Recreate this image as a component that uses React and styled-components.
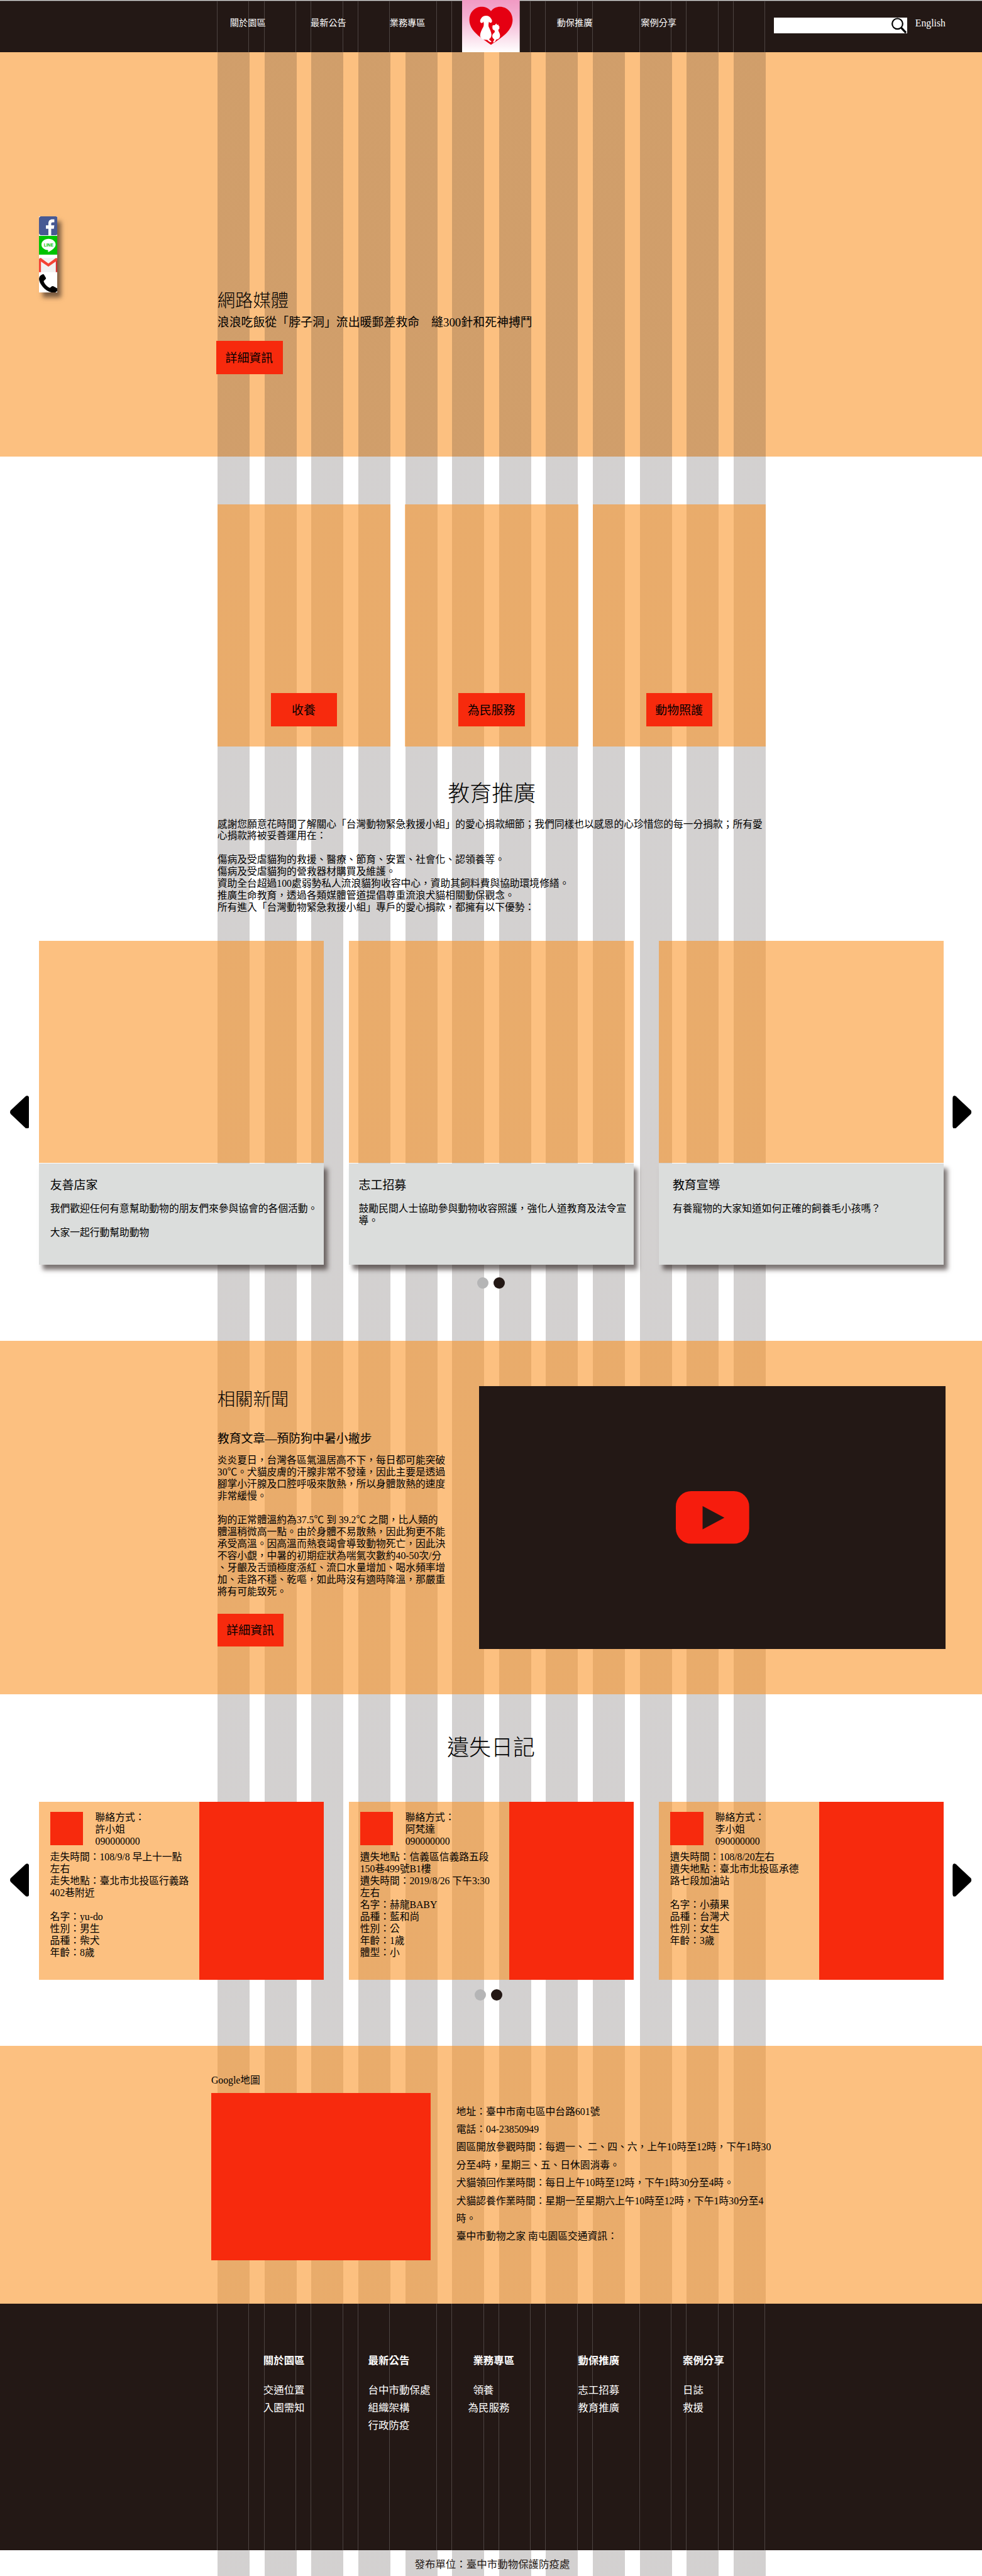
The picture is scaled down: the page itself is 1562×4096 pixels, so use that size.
import React from "react";
import styled, { createGlobalStyle, css } from "styled-components";

// Design units are those of a 1981px wide artboard, shown in a 1562px wide page.
const RATIO = 1562 / 1981;
const u = (n) => `${+(n * RATIO).toFixed(3)}px`;

const ink = "#231815";
const red = "#f72a0d";
const orange = "#fcc080";
const orangeGlass = "rgba(250, 142, 28, 0.56)";
const stripe = "rgba(35, 24, 21, 0.2)";
const hairline = "#4c4341";

const stripes = css`
  background-image: repeating-linear-gradient(
    90deg,
    ${stripe} 0 ${u(64.7)},
    transparent ${u(64.7)} ${u(94.66)}
  );
  background-position: ${u(438.5)} 0;
  background-size: ${u(1106.2)} 100%;
  background-repeat: no-repeat;
`;

const hairlines = css`
  background-image: repeating-linear-gradient(
    90deg,
    ${hairline} 0 ${u(1.1)},
    transparent ${u(1.1)} ${u(64)},
    ${hairline} ${u(64)} ${u(65.1)},
    transparent ${u(65.1)} ${u(94.66)}
  );
  background-position: ${u(437.8)} 0;
  background-size: ${u(1107)} 100%;
  background-repeat: no-repeat;
`;

const GlobalStyle = createGlobalStyle`
  *, *::before, *::after { box-sizing: border-box; }
  body { margin: 0; background: #fff; }
`;

const Page = styled.main`
  width: 1562px;
  height: 4096px;
  overflow: hidden;
  color: #000;
  background-color: #fff;
  ${stripes}
  font-family: "Liberation Serif", "Noto Sans CJK TC", serif;
  font-weight: 400;
  font-size: ${u(20)};
  line-height: ${u(24)};
`;

/* ---------- shared parts ---------- */

const Line = styled.div`
  min-height: 1lh;
  white-space: pre;
`;

const Copy = styled.div`
  margin-top: ${(p) => u(p.$top || 0)};
  line-height: ${(p) => u(p.$leading || 24)};
`;

const Lines = ({ lines, ...rest }) => (
  <Copy {...rest}>
    {lines.map((line, i) => (
      <Line key={i}>{line}</Line>
    ))}
  </Copy>
);

const Button = styled.button`
  display: flex;
  align-items: center;
  justify-content: center;
  width: ${u(134)};
  height: ${u(67)};
  margin: ${(p) => u(p.$top || 0)} 0 0 ${(p) => u(p.$left || 0)};
  padding: ${u(3)} ${u(1)} 0 0;
  border: 0;
  background: ${red};
  color: #000;
  font: inherit;
  font-size: ${u(24)};
  line-height: ${u(30)};
  white-space: nowrap;
`;

const SectionTitle = styled.h2`
  margin: 0;
  padding-left: ${(p) => u(p.$shift || 0)};
  font-size: ${u(44.3)};
  font-weight: 300;
  line-height: ${u(60)};
  text-align: center;
`;

const BlockTitle = styled.h2`
  margin: 0;
  font-size: ${u(36)};
  font-weight: 300;
  line-height: ${u(44)};
`;

const Subtitle = styled.h3`
  margin: ${(p) => u(p.$top || 0)} 0 0;
  font-size: ${u(24)};
  font-weight: 400;
  line-height: ${u(30)};
  white-space: nowrap;
`;

const Carousel = styled.div`
  display: flex;
  align-items: flex-start;
  margin-top: ${(p) => u(p.$top)};
  padding-left: ${u(20)};
`;

const Slides = styled.div`
  display: flex;
  gap: ${u(50.3)};
  margin: 0 ${u(18)} 0 ${u(20)};
`;

const ArrowIcon = styled.svg`
  flex: none;
  display: block;
  width: ${u(38.4)};
  height: ${u(67)};
  margin-top: ${(p) => u(p.$top)};
  transform: ${(p) => (p.$flip ? "scaleX(-1)" : "none")};
`;

const Arrow = (props) => (
  <ArrowIcon viewBox="0 0 38 67" preserveAspectRatio="none" {...props}>
    <path d="M31 1.5Q34-.8 36.500 1.200Q38 2.600 38 6V61Q38 64.400 36.500 65.800Q34 67.800 31 65.500L1.500 37.500Q-1.500 33.500 1.500 29.500Z" />
  </ArrowIcon>
);

const Dots = styled.div`
  display: flex;
  gap: ${u(9.8)};
  margin: ${(p) => u(p.$top)} 0 0 ${(p) => u(p.$left)};
`;

const Dot = styled.span`
  width: ${u(23)};
  height: ${u(23)};
  border-radius: 50%;
  background: ${(p) => (p.$active ? ink : "#b5b5b6")};
`;

/* ---------- header ---------- */

const Header = styled.header`
  display: flex;
  align-items: flex-start;
  height: ${u(105.3)};
  padding-left: ${u(464)};
  background-color: ${ink};
  ${hairlines}
  box-shadow: inset 0 1px #d5d9d8, inset 0 2px #5c5351;
  color: #fff;
`;

const NavLink = styled.a`
  flex: none;
  width: ${u(72)};
  margin: ${u(34)} 0 0 ${(p) => u(p.$before)};
  font-size: ${u(18)};
  line-height: ${u(25)};
  white-space: nowrap;
`;

const Logo = styled.svg`
  flex: none;
  display: block;
  width: ${u(116.3)};
  height: ${u(105.3)};
  margin-left: ${u(74)};
`;

const SearchBox = styled.div`
  flex: none;
  display: flex;
  justify-content: flex-end;
  width: ${u(268)};
  height: ${u(32)};
  margin: ${u(35)} 0 0 ${u(197)};
  background: #fff;
`;

const SearchIcon = styled.svg`
  width: ${u(32)};
  height: ${u(32)};
`;

const Language = styled.a`
  margin: ${u(34)} 0 0 ${u(16.6)};
  font-size: ${u(20)};
  line-height: ${u(25)};
`;

/* ---------- hero ---------- */

const Hero = styled.section`
  display: flex;
  align-items: flex-start;
  height: ${u(815.4)};
  background-color: ${orange};
  ${stripes}
`;

const SocialBar = styled.aside`
  display: flex;
  flex-direction: column;
  width: ${u(38)};
  height: ${u(154)};
  margin: ${u(330.7)} ${u(322.5)} 0 ${u(78)};
  background: #fff;
  box-shadow: ${u(8)} ${u(10)} ${u(9)} rgba(35, 24, 21, 0.6);
`;

const SocialIcon = styled.svg`
  display: block;
  width: ${u(38)};
  height: ${(p) => u(p.$h)};
  margin-bottom: ${(p) => u(p.$gap)};
`;

const HeroCopy = styled.div`
  padding-top: ${u(480.2)};
`;

/* ---------- services ---------- */

const Services = styled.section`
  display: flex;
  gap: ${u(29.5)};
  padding: ${u(96.3)} 0 0 ${u(438.5)};
`;

const ServiceCard = styled.article`
  display: flex;
  align-items: flex-end;
  justify-content: center;
  width: ${u(349.2)};
  height: ${u(488.5)};
  padding-bottom: ${u(41)};
  background: ${orangeGlass};
`;

/* ---------- education ---------- */

const Education = styled.section`
  height: ${u(1198.5)};
  padding-top: ${u(66.5)};
`;

const Intro = styled.div`
  padding: ${u(18.7)} 0 0 ${u(438.5)};
`;

const EduCard = styled.article`
  display: flex;
  flex-direction: column;
  gap: ${u(1.3)};
  width: ${u(575)};
`;

const EduImage = styled.div`
  height: ${u(447.7)};
  background: ${orangeGlass};
`;

const EduPanel = styled.div`
  height: ${u(204)};
  padding: ${u(29)} 0 0 ${(p) => u(p.$inset)};
  background: #dbdddc;
  box-shadow: ${u(7)} ${u(10)} ${u(9)} rgba(35, 24, 21, 0.6);
`;

/* ---------- news ---------- */

const News = styled.section`
  display: flex;
  align-items: flex-start;
  height: ${u(713.3)};
  padding-left: ${u(438.5)};
  background: ${orangeGlass};
`;

const NewsCopy = styled.div`
  width: ${u(528.5)};
  padding-top: ${u(98)};
`;

const Video = styled.div`
  display: flex;
  align-items: center;
  justify-content: center;
  width: ${u(941)};
  height: ${u(530)};
  margin-top: ${u(91)};
  background: ${ink};
`;

const PlayButton = styled.svg`
  width: ${u(148)};
  height: ${u(106)};
`;

/* ---------- lost pets ---------- */

const Lost = styled.section`
  height: ${u(708.8)};
  padding-top: ${u(78.5)};
`;

const LostCard = styled.article`
  display: flex;
  width: ${u(575)};
  height: ${u(359)};
  background: ${orangeGlass};
`;

const LostInfo = styled.div`
  flex: 1;
  padding: ${u(21)} 0 0 ${u(22.6)};
`;

const LostPhoto = styled.div`
  width: ${u(251.5)};
  background: ${red};
`;

const Contact = styled.div`
  display: flex;
  gap: ${u(24.3)};
  height: ${u(79)};
`;

const Avatar = styled.div`
  width: ${u(67)};
  height: ${u(67)};
  background: ${red};
`;

/* ---------- map ---------- */

const Location = styled.section`
  display: flex;
  gap: ${u(51.4)};
  height: ${u(520)};
  padding-left: ${u(426)};
  background: ${orangeGlass};
`;

const MapColumn = styled.div`
  width: ${u(443)};
  padding-top: ${u(58)};
`;

const Map = styled.div`
  height: ${u(336.6)};
  margin-top: ${u(13)};
  background: ${red};
`;

/* ---------- footer ---------- */

const Footer = styled.footer`
  display: flex;
  height: ${u(497.3)};
  padding: ${u(100)} 0 0 ${u(531)};
  background-color: ${ink};
  ${hairlines}
  color: #fff;
  font-size: ${u(20.9)};
`;

const FooterColumn = styled.div`
  width: ${u(211.6)};
`;

const FooterTitle = styled.h4`
  margin: 0 0 ${u(27)};
  font-size: inherit;
  font-weight: 700;
  line-height: ${u(30)};
`;

const FooterLink = styled.a`
  display: block;
  margin-left: ${(p) => u(p.$shift || 0)};
  line-height: ${u(35.3)};
  white-space: nowrap;
`;

const Publisher = styled.p`
  margin: 0;
  padding: ${u(13)} 0 0 ${u(5)};
  color: ${ink};
  font-size: ${u(20.9)};
  line-height: ${u(30)};
  text-align: center;
`;

/* ---------- content ---------- */

const services = ["收養", "為民服務", "動物照護"];

const intro = [
  "感謝您願意花時間了解關心「台灣動物緊急救援小組」的愛心捐款細節；我們同樣也以感恩的心珍惜您的每一分捐款；所有愛",
  "心捐款將被妥善運用在：",
  "",
  "傷病及受虐貓狗的救援、醫療、節育、安置、社會化、認領養等。",
  "傷病及受虐貓狗的營救器材購買及維護。",
  "資助全台超過100處弱勢私人流浪貓狗收容中心，資助其飼料費與協助環境修繕。",
  "推廣生命教育，透過各類媒體管道提倡尊重流浪犬貓相關動保觀念。",
  "所有進入「台灣動物緊急救援小組」專戶的愛心捐款，都擁有以下優勢：",
];

const eduCards = [
  {
    title: "友善店家",
    inset: 22.7,
    lines: ["我們歡迎任何有意幫助動物的朋友們來參與協會的各個活動。", "", "大家一起行動幫助動物"],
  },
  {
    title: "志工招募",
    inset: 20,
    lines: ["鼓勵民間人士協助參與動物收容照護，強化人道教育及法令宣", "導。"],
  },
  { title: "教育宣導", inset: 28, lines: ["有養寵物的大家知道如何正確的飼養毛小孩嗎？"] },
];

const article = [
  "炎炎夏日，台灣各區氣溫居高不下，每日都可能突破",
  "30℃。犬貓皮膚的汗腺非常不發達，因此主要是透過",
  "腳掌小汗腺及口腔呼吸來散熱，所以身體散熱的速度",
  "非常緩慢。",
  "",
  "狗的正常體溫約為37.5℃ 到 39.2℃ 之間，比人類的",
  "體溫稍微高一點。由於身體不易散熱，因此狗更不能",
  "承受高溫。因高溫而熱衰竭會導致動物死亡，因此決",
  "不容小覷，中暑的初期症狀為喘氣次數約40-50次/分",
  "、牙齦及舌頭極度漲紅、流口水量增加、喝水頻率增",
  "加、走路不穩、乾嘔，如此時沒有適時降溫，那嚴重",
  "將有可能致死。",
];

const lostPets = [
  {
    contact: ["聯絡方式：", "許小姐", "090000000"],
    details: [
      "走失時間：108/9/8 早上十一點",
      "左右",
      "走失地點：臺北市北投區行義路",
      "402巷附近",
      "",
      "名字：yu-do",
      "性別：男生",
      "品種：柴犬",
      "年齡：8歲",
    ],
  },
  {
    contact: ["聯絡方式：", "阿梵達", "090000000"],
    details: [
      "遺失地點：信義區信義路五段",
      "150巷499號B1樓",
      "遺失時間：2019/8/26 下午3:30",
      "左右",
      "名字：赫龍BABY",
      "品種：藍和尚",
      "性別：公",
      "年齡：1歲",
      "體型：小",
    ],
  },
  {
    contact: ["聯絡方式：", "李小姐", "090000000"],
    details: [
      "遺失時間：108/8/20左右",
      "遺失地點：臺北市北投區承德",
      "路七段加油站",
      "",
      "名字：小蘋果",
      "品種：台灣犬",
      "性別：女生",
      "年齡：3歲",
    ],
  },
];

const address = [
  "地址：臺中市南屯區中台路601號",
  "電話：04-23850949",
  "園區開放參觀時間：每週一、 二、四、六，上午10時至12時，下午1時30",
  "分至4時，星期三、五、日休園消毒。",
  "犬貓領回作業時間：每日上午10時至12時，下午1時30分至4時。",
  "犬貓認養作業時間：星期一至星期六上午10時至12時，下午1時30分至4",
  "時。",
  "臺中市動物之家 南屯園區交通資訊：",
];

const footerColumns = [
  { title: "關於園區", links: [["交通位置"], ["入園需知"]] },
  { title: "最新公告", links: [["台中市動保處"], ["組織架構"], ["行政防疫"]] },
  { title: "業務專區", links: [["領養"], ["為民服務", -10]] },
  { title: "動保推廣", links: [["志工招募"], ["教育推廣"]] },
  { title: "案例分享", links: [["日誌"], ["救援"]] },
];

const BrandLogo = () => (
  <Logo viewBox="36 0 349 316" preserveAspectRatio="none">
    <defs>
      <linearGradient id="logoSky" x1="0" y1="0" x2="0" y2="1">
        <stop offset="0" stopColor="#f19ac3" />
        <stop offset="0.3" stopColor="#f3add0" />
        <stop offset="0.75" stopColor="#fbe3ee" />
        <stop offset="1" stopColor="#ffffff" />
      </linearGradient>
    </defs>
    <rect x="36" y="0" width="349" height="316" fill="url(#logoSky)" />
    <path
      fill="#e50012"
      d="M211 68C196 48 174 41 154 41C112 41 80 76 80 120C80 186 146 226 211 271C278 228 342 184 342 120C342 76 308 41 266 41C244 41 223 50 211 68Z"
    />
    <path
      fill="#fff"
      d="M182 95C168 95 158 101 152 110C144 120 143 131 149 137C155 142 162 138 165 130C169 142 168 152 165 162C156 178 146 198 145 214C145 225 152 233 162 239L189 242C196 250 204 256 212 255C215 253 213 249 208 246C204 243 200 240 200 236C208 232 214 222 214 210C213 192 203 176 197 162C195 152 196 142 199 131C203 138 210 140 215 135C220 129 217 119 210 110C204 100 194 95 182 95Z"
    />
    <path
      fill="#fff"
      d="M243 142L234 152L220 153L222 160L215 163L222 167L217 172L224 174L221 180L229 182C236 187 235 193 231 198C222 204 218 212 219 221C220 229 225 235 231 238C230 246 222 252 224 257C230 259 239 250 243 239C256 239 265 230 266 217C266 202 257 193 255 183L260 174L264 168L259 165L264 160L257 157L256 148L248 151Z"
    />
  </Logo>
);

const Facebook = () => (
  <SocialIcon viewBox="0 0 114 114" $h={38} $gap={2}>
    <rect width="114" height="114" rx="14" fill="#475993" />
    <path
      fill="#fff"
      d="M57 114V75H42V54H57V43C57 26 67 18 80 18H93V36H84C77 36 74 39 74 45V54H93L90 75H74V114Z"
    />
  </SocialIcon>
);

const LineBadgeText = styled.text`
  font-family: "Liberation Sans", Arial, sans-serif;
  font-size: 27px;
  font-weight: 700;
`;

const LineApp = () => (
  <SocialIcon viewBox="0 0 114 114" $h={38} $gap={6}>
    <rect width="114" height="114" fill="#00c300" />
    <path
      fill="#fff"
      d="M58 18C34 18 15 33 15 53C15 70 31 84 52 86C57 88 56 92 54 99C62 96 101 75 101 53C101 33 82 18 58 18Z"
    />
    <LineBadgeText x="58" y="63" textAnchor="middle" textLength="58" lengthAdjust="spacingAndGlyphs" fill="#00c300">
      LINE
    </LineBadgeText>
  </SocialIcon>
);

const Gmail = () => (
  <SocialIcon viewBox="0 0 114 87" $h={29} $gap={3.7}>
    <rect width="114" height="87" fill="#f2f2f2" />
    <path fill="#f44336" d="M0 4V87H12V22Z" />
    <path fill="#d32f2f" d="M114 4V87H102V22Z" />
    <path fill="#f44336" d="M0 14C0 2 7-2 13 2L57 34L101 2C107-2 114 2 114 14L57 53Z" />
  </SocialIcon>
);

const Phone = () => (
  <SocialIcon viewBox="0 0 114 113" $h={37.5} $gap={0}>
    <path d="M21 1C26-1 29 0 31 4L42 23C43 26 42 28 40 30L28 42C31 57 50 77 66 83L78 74C80 72 83 72 86 73L109 85C114 88 115 93 113 98C109 108 98 114 82 112C38 106 2 60 0 30C0 15 8 6 21 1Z" />
  </SocialIcon>
);

export default function App() {
  return (
    <>
      <GlobalStyle />
      <Page>
        <Header>
          <NavLink $before={0}>關於園區</NavLink>
          <NavLink $before={90.6}>最新公告</NavLink>
          <NavLink $before={87.4}>業務專區</NavLink>
          <BrandLogo />
          <NavLink $before={75}>動保推廣</NavLink>
          <NavLink $before={97.5}>案例分享</NavLink>
          <SearchBox>
            <SearchIcon viewBox="0 0 32 32">
              <circle cx="13.3" cy="12.5" r="10.6" fill="none" stroke="#000" strokeWidth="2.8" />
              <path d="M21 20.5L30.5 30.5" stroke="#000" strokeWidth="4.2" />
            </SearchIcon>
          </SearchBox>
          <Language>English</Language>
        </Header>

        <Hero>
          <SocialBar>
            <Facebook />
            <LineApp />
            <Gmail />
            <Phone />
          </SocialBar>
          <HeroCopy>
            <BlockTitle>網路媒體</BlockTitle>
            <Subtitle $top={6}>浪浪吃飯從「脖子洞」流出暖郵差救命　縫300針和死神搏鬥</Subtitle>
            <Button $top={22.5} $left={-2.3}>詳細資訊</Button>
          </HeroCopy>
        </Hero>

        <Services>
          {services.map((name) => (
            <ServiceCard key={name}>
              <Button>{name}</Button>
            </ServiceCard>
          ))}
        </Services>

        <Education>
          <SectionTitle $shift={3}>教育推廣</SectionTitle>
          <Intro>
            <Lines lines={intro} />
          </Intro>
          <Carousel $top={54.6}>
            <Arrow $top={311.5} />
            <Slides>
              {eduCards.map((card) => (
                <EduCard key={card.title}>
                  <EduImage />
                  <EduPanel $inset={card.inset}>
                    <Subtitle>{card.title}</Subtitle>
                    <Lines $top={20.7} lines={card.lines} />
                  </EduPanel>
                </EduCard>
              ))}
            </Slides>
            <Arrow $top={311.5} $flip />
          </Carousel>
          <Dots $top={25.5} $left={963}>
            <Dot />
            <Dot $active />
          </Dots>
        </Education>

        <News>
          <NewsCopy>
            <BlockTitle>相關新聞</BlockTitle>
            <Subtitle $top={40.5}>教育文章—預防狗中暑小撇步</Subtitle>
            <Lines $top={17.5} lines={article} />
            <Button $top={32}>詳細資訊</Button>
          </NewsCopy>
          <Video>
            <PlayButton viewBox="0 0 148 106" preserveAspectRatio="none">
              <rect width="148" height="106" rx="31" fill="#f61c0d" />
              <path d="M54 30L98 53.5L54 77Z" fill={ink} />
            </PlayButton>
          </Video>
        </News>

        <Lost>
          <SectionTitle>遺失日記</SectionTitle>
          <Carousel $top={77.5}>
            <Arrow $top={124.5} />
            <Slides>
              {lostPets.map((pet) => (
                <LostCard key={pet.contact[1]}>
                  <LostInfo>
                    <Contact>
                      <Avatar />
                      <Lines $top={-0.5} lines={pet.contact} />
                    </Contact>
                    <Lines $top={1} lines={pet.details} />
                  </LostInfo>
                  <LostPhoto />
                </LostCard>
              ))}
            </Slides>
            <Arrow $top={124.5} $flip />
          </Carousel>
          <Dots $top={19} $left={958}>
            <Dot />
            <Dot $active />
          </Dots>
        </Lost>

        <Location>
          <MapColumn>
            <Line>Google地圖</Line>
            <Map />
          </MapColumn>
          <Lines $top={114.6} $leading={36} lines={address} />
        </Location>

        <Footer>
          {footerColumns.map((column) => (
            <FooterColumn key={column.title}>
              <FooterTitle>{column.title}</FooterTitle>
              {column.links.map(([label, shift]) => (
                <FooterLink key={label} $shift={shift}>
                  {label}
                </FooterLink>
              ))}
            </FooterColumn>
          ))}
        </Footer>
        <Publisher>發布單位：臺中市動物保護防疫處</Publisher>
      </Page>
    </>
  );
}
